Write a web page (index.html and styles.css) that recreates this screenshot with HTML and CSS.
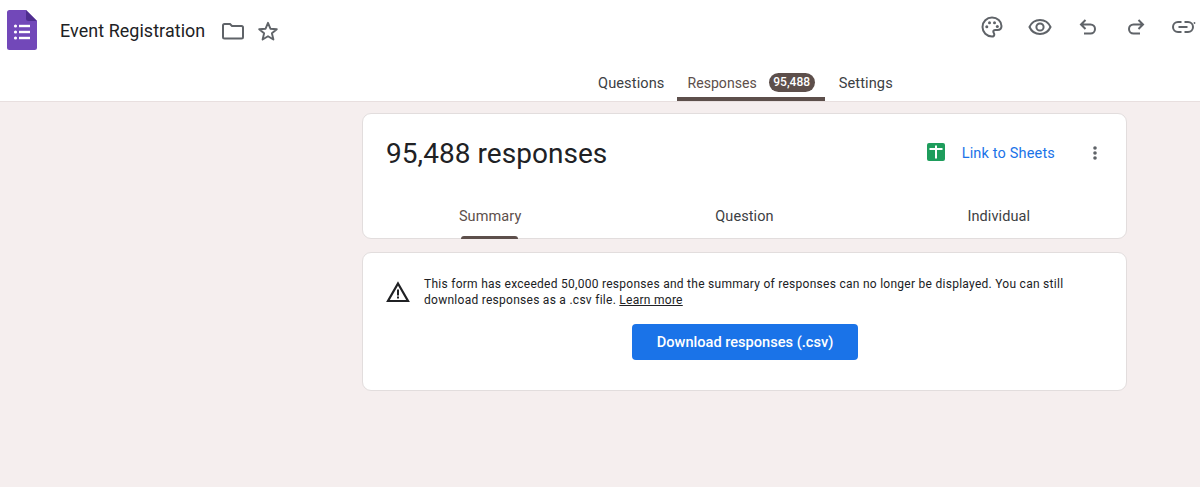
FILE: index.html
```html
<!DOCTYPE html>
<html lang="en">
<head>
<meta charset="utf-8">
<title>Event Registration</title>
<link rel="stylesheet" href="styles.css">
</head>
<body>
<header class="header">
  <div class="toprow">
    <svg class="logo" width="30" height="40" viewBox="0 0 30 40">
      <path d="M2.500 0H19L30 11V37.500A2.500 2.500 0 0 1 27.500 40H2.500A2.500 2.500 0 0 1 0 37.500V2.500A2.500 2.500 0 0 1 2.500 0Z" fill="#7248b9"/>
      <path d="M19 0L30 11H21.500A2.500 2.500 0 0 1 19 8.500Z" fill="#4f2d8f"/>
      <g fill="#fff"><circle cx="8.500" cy="16" r="1.600"/><circle cx="8.500" cy="22" r="1.600"/><circle cx="8.500" cy="28" r="1.600"/><rect x="12" y="14.800" width="11" height="2.400"/><rect x="12" y="20.800" width="11" height="2.400"/><rect x="12" y="26.800" width="11" height="2.400"/></g>
    </svg>
    <span class="doc-title">Event Registration</span>
    <svg class="ic folder" width="24" height="24" viewBox="0 0 24 24"><path d="M2 6.500A1.500 1.500 0 0 1 3.500 5H9L11 7H20.500A1.500 1.500 0 0 1 22 8.500V18A1.500 1.500 0 0 1 20.500 19.500H3.500A1.500 1.500 0 0 1 2 18Z" fill="none" stroke="#5f6368" stroke-width="2"/></svg>
    <svg class="ic star" width="24" height="24" viewBox="0 0 24 24"><path d="M12 3.800L14.400 9.700L20.800 10.200L15.900 14.300L17.400 20.500L12 17.200L6.600 20.500L8.100 14.300L3.200 10.200L9.600 9.700Z" fill="none" stroke="#5f6368" stroke-width="1.900" stroke-linejoin="round"/></svg>
    <div class="actions">
      <svg width="24" height="24" viewBox="0 0 24 24"><path d="M12 2.500A9.500 9.500 0 0 0 12 21.500C13.500 21.500 14.300 20.500 14.300 19.400C14.300 18.200 13.300 17.800 13.300 16.700C13.300 15.600 14.200 14.900 15.300 14.900H17.400C19.800 14.900 21.500 13.200 21.500 10.900C21.500 6.200 17.300 2.500 12 2.500Z" fill="none" stroke="#5f6368" stroke-width="2"/><g fill="#5f6368"><circle cx="6.800" cy="11.800" r="1.500"/><circle cx="9.500" cy="7.700" r="1.500"/><circle cx="14.500" cy="7.700" r="1.500"/><circle cx="17.300" cy="11.500" r="1.500"/></g></svg>
      <svg width="24" height="24" viewBox="0 0 24 24"><path d="M1.500 12C3.500 7.500 7.500 5 12 5S20.500 7.500 22.500 12C20.500 16.500 16.500 19 12 19S3.500 16.500 1.500 12Z" fill="none" stroke="#5f6368" stroke-width="2"/><circle cx="12" cy="12" r="3.600" fill="none" stroke="#5f6368" stroke-width="2"/></svg>
      <svg width="24" height="24" viewBox="0 0 24 24"><path d="M9.500 5L5 9.500L9.500 14M5.500 9.500H14.500A4.500 4.500 0 0 1 14.500 18.500H8" fill="none" stroke="#5f6368" stroke-width="2"/></svg>
      <svg width="24" height="24" viewBox="0 0 24 24"><path d="M14.500 5L19 9.500L14.500 14M18.500 9.500H9.500A4.500 4.500 0 0 0 9.500 18.500H16" fill="none" stroke="#5f6368" stroke-width="2"/></svg>
      <svg width="26" height="24" viewBox="0 0 26 24"><path d="M9.500 7H6A5 5 0 0 0 6 17H9.500M12.500 7H16A5 5 0 0 1 16 17H12.500M6.500 12H15.500" fill="none" stroke="#5f6368" stroke-width="2"/><circle cx="22.500" cy="8" r="0.900" fill="#5f6368"/></svg>
    </div>
  </div>
  <nav class="tabs">
    <a class="tab tab-first">Questions</a>
    <a class="tab tab-active"><span class="tab-label">Responses</span><span class="badge">95,488</span></a>
    <a class="tab tab-last">Settings</a>
  </nav>
</header>
<main class="main">
  <section class="card summary">
    <div class="summary-head">
      <h1 class="count">95,488 responses</h1>
      <svg class="sheets" width="18" height="18" viewBox="0 0 18 18"><rect width="18" height="18" rx="2" fill="#1e9d5c"/><path d="M2.500 5H8V2.500H10V5H15.500V7H10V15.500H8V7H2.500Z" fill="#fff"/></svg>
      <span class="sheets-link">Link to Sheets</span>
      <svg class="dots" width="4" height="14" viewBox="0 0 4 14"><g fill="#5f6368"><circle cx="2" cy="2" r="1.800"/><circle cx="2" cy="7" r="1.800"/><circle cx="2" cy="12" r="1.800"/></g></svg>
    </div>
    <div class="subtabs">
      <div class="subtab subtab-active"><span class="subtab-label">Summary</span><span class="indicator"></span></div>
      <div class="subtab"><span class="subtab-label">Question</span></div>
      <div class="subtab"><span class="subtab-label">Individual</span></div>
    </div>
  </section>
  <section class="card notice">
    <div class="notice-row">
      <svg class="warn" width="24" height="24" viewBox="0 0 24 24"><path d="M12 3.500L22 21H2Z" fill="none" stroke="#202124" stroke-width="2.200" stroke-linejoin="miter"/><rect x="11" y="9.500" width="2" height="6" fill="#202124"/><rect x="11" y="16.500" width="2" height="2" fill="#202124"/></svg>
      <p class="notice-text">This form has exceeded 50,000 responses and the summary of responses can no longer be displayed. You can still download responses as a .csv file. <a class="learn">Learn more</a></p>
    </div>
    <button class="download">Download responses (.csv)</button>
  </section>
</main>
</body>
</html>
```
FILE: styles.css
```css
* { box-sizing: border-box; }
html, body { margin: 0; height: 100%; }
body {
  background: #f5eeee;
  font-family: Roboto, "Liberation Sans", sans-serif;
  color: #202124;
  overflow: hidden;
}
.header {
  height: 102px;
  background: #fff;
  border-bottom: 1px solid #e8dfdf;
}
.toprow {
  height: 62px;
  display: flex;
  align-items: center;
  padding-left: 7px;
}
.logo { margin-top: -2px; }
.doc-title {
  margin-left: 23px;
  margin-top: -2px;
  font-size: 17.900px;
  color: #202124;
  letter-spacing: 0.080px;
}
.folder { margin-left: 16px; }
.star { margin-left: 11px; }
.actions {
  margin-left: auto;
  margin-right: 2px;
  display: flex;
  align-items: center;
  gap: 24px;
  margin-top: -8px;
}
.tabs {
  height: 39px;
  display: flex;
  padding-left: 598px;
  font-size: 14.600px;
  letter-spacing: 0.100px;
}
.tab {
  display: flex;
  align-items: center;
  height: 39px;
  color: #3c4043;
}
.tab-first, .tab-last { padding-top: 5px; padding-bottom: 3px; }
.tab-first { margin-right: 12px; }
.tab-last { margin-left: 14px; }
.tab-active {
  padding: 8px 10px 0 11px;
  color: #5d4f4b;
  border-bottom: 4px solid #5d4f4b;
  border-radius: 3px 3px 0 0;
  gap: 12px;
}
.tab-label { font-size: 14.100px; letter-spacing: 0; margin-top: -2px; }
.badge {
  background: #5d4f4b;
  color: #fff;
  font-size: 12px;
  font-weight: 500;
  border-radius: 10px;
  height: 19px;
  line-height: 19px;
  width: 46px;
  text-align: center;
  margin-top: -2px;
  letter-spacing: 0;
}
.main {
  width: 765px;
  margin-left: 362px;
  padding-top: 11px;
  display: flex;
  flex-direction: column;
  gap: 13px;
}
.card {
  background: #fff;
  border: 1px solid #e2dddd;
  border-radius: 9px;
}
.summary { height: 126px; display: flex; flex-direction: column; }
.summary-head {
  height: 78px;
  display: flex;
  align-items: center;
  padding: 0 29px 0 23px;
}
.count {
  margin: 0;
  flex: 1;
  font-size: 28px;
  font-weight: 400;
  color: #202124;
  letter-spacing: 0.050px;
}
.sheets { margin-top: -3px; margin-right: 1px; }
.sheets-link {
  margin-left: 16px;
  margin-right: 38px;
  font-size: 14.500px;
  color: #1a73e8;
  letter-spacing: 0.170px;
}
.dots { margin-top: 0; }
.subtabs {
  flex: 1;
  display: grid;
  grid-template-columns: repeat(3, 1fr);
}
.subtab {
  display: flex;
  flex-direction: column;
  align-items: center;
  justify-content: space-between;
}
.subtab-label {
  font-size: 14.500px;
  color: #3c4043;
  line-height: 20px;
  margin-top: 15px;
  letter-spacing: 0.100px;
}
.subtab-active .subtab-label { color: #5d4f4b; }
.indicator {
  width: 57px;
  height: 3px;
  margin: 0 2px -1px 0;
  background: #5d4f4b;
  border-radius: 3px 3px 0 0;
}
.notice { height: 139px; padding: 23px 22px 0 23px; }
.notice-row { display: flex; align-items: center; gap: 14px; }
.warn { flex: none; }
.notice-text {
  margin: 0;
  font-size: 12px;
  line-height: 16px;
  letter-spacing: 0.270px;
  color: #202124;
  flex: 1;
}
.learn { text-decoration: underline; }
.download {
  display: block;
  margin: 16px auto 0;
  width: 226px;
  height: 36px;
  border: 0;
  border-radius: 4px;
  background: #1a73e8;
  color: #fff;
  font-family: inherit;
  font-size: 14.600px;
  font-weight: 500;
}
```
